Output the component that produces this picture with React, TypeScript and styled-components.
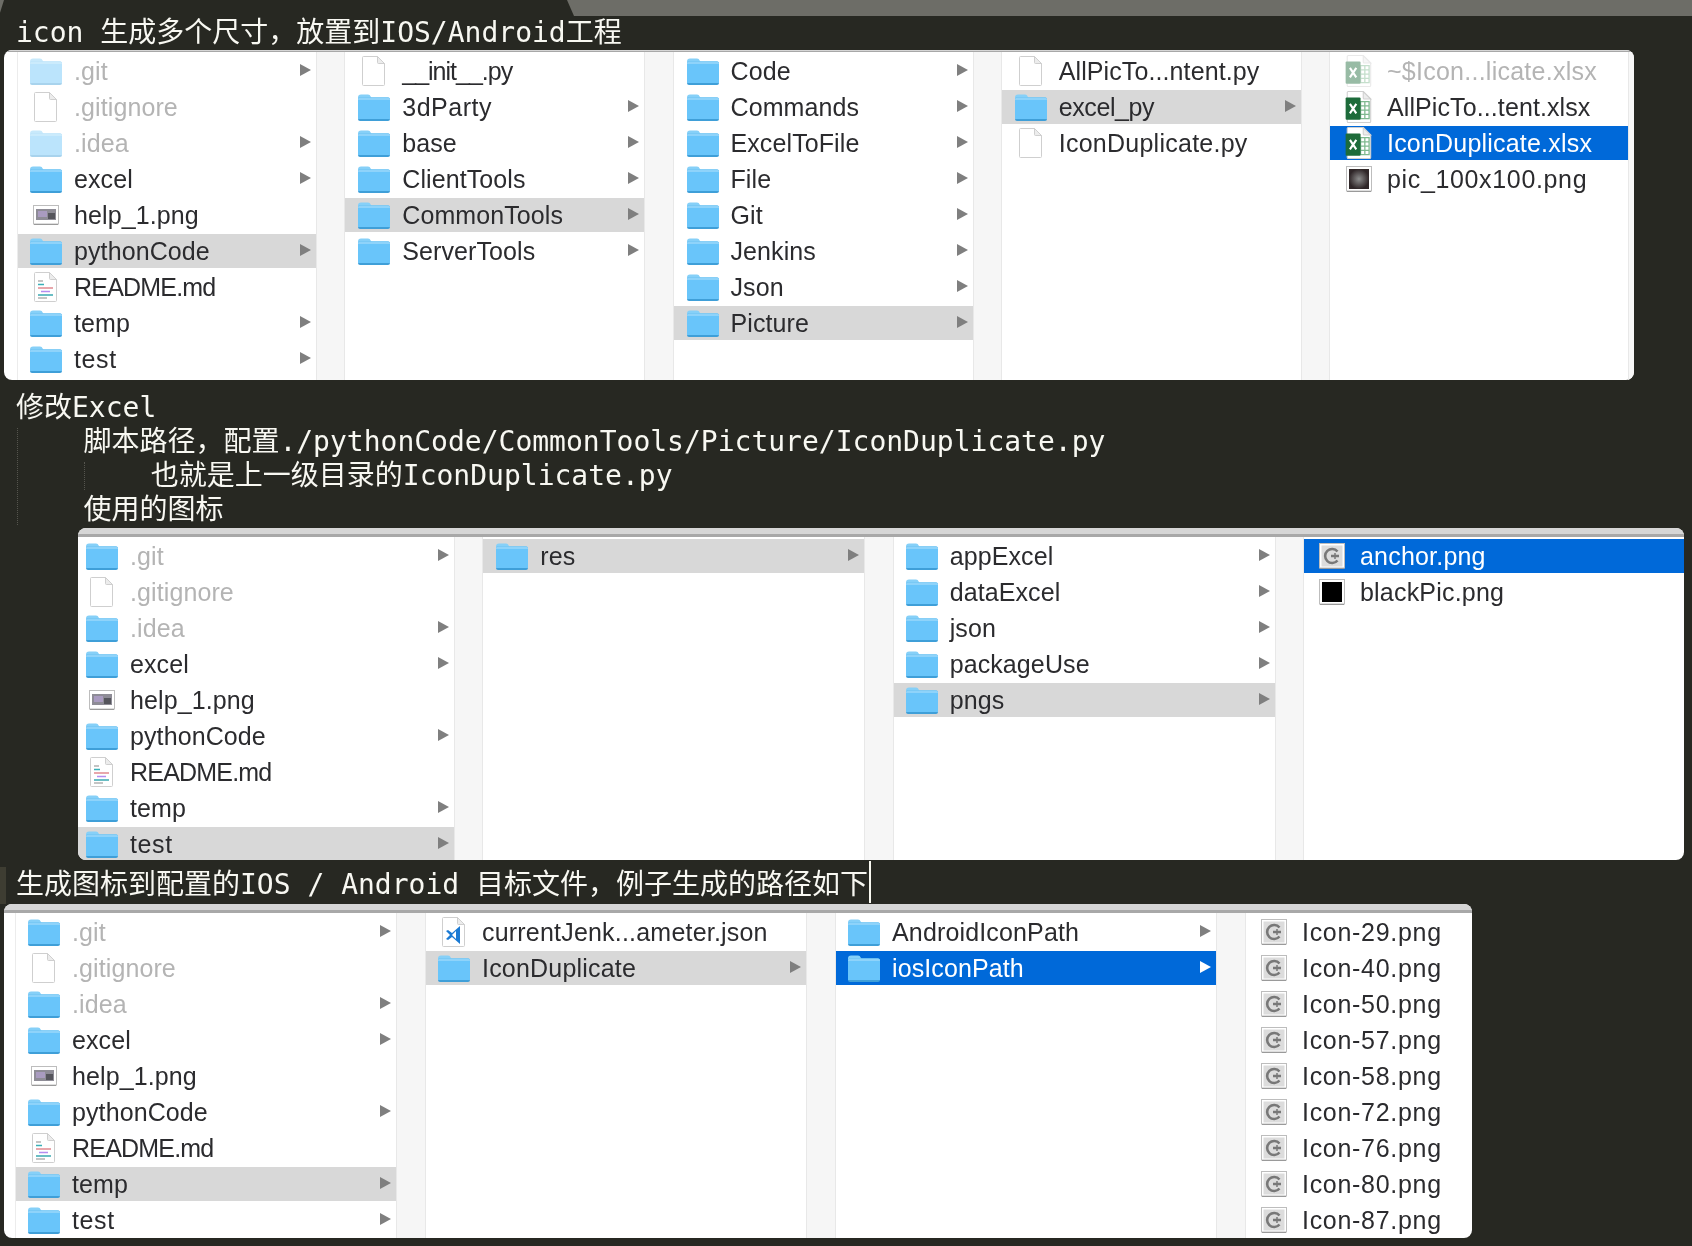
import React from 'react';
import styled, { createGlobalStyle } from 'styled-components';

type IconKind =
  | 'folder'
  | 'file'
  | 'readme'
  | 'shot'
  | 'excel'
  | 'anchor'
  | 'black'
  | 'pic'
  | 'json';

interface Item {
  name: string;
  icon: IconKind;
  arrow?: boolean;
  dim?: boolean;
  fade?: boolean;
  state?: 'gray' | 'blue';
  track?: number;
}

interface ColumnData {
  width: number;
  inset?: number;
  items: Item[];
}

const folder = (name: string, extra: Partial<Item> = {}): Item => ({
  name,
  icon: 'folder',
  arrow: true,
  ...extra,
});

const rootItems = (dimFolder: boolean, open: string): Item[] => [
  folder('.git', { dim: true, fade: dimFolder }),
  { name: '.gitignore', icon: 'file', dim: true },
  folder('.idea', { dim: true, fade: dimFolder }),
  folder('excel'),
  { name: 'help_1.png', icon: 'shot' },
  folder('pythonCode', open === 'pythonCode' ? { state: 'gray' } : {}),
  { name: 'README.md', icon: 'readme', track: -0.8 },
  folder('temp', open === 'temp' ? { state: 'gray' } : {}),
  folder('test', { track: 0.6, ...(open === 'test' ? { state: 'gray' as const } : {}) }),
];

const firstPanel: ColumnData[] = [
  { width: 298, inset: 12, items: rootItems(true, 'pythonCode') },
  {
    width: 299,
    items: [
      { name: '__init__.py', icon: 'file', track: -1 },
      folder('3dParty', { track: 0.5 }),
      folder('base'),
      folder('ClientTools'),
      folder('CommonTools', { state: 'gray' }),
      folder('ServerTools'),
    ],
  },
  {
    width: 299,
    items: [
      folder('Code'),
      folder('Commands'),
      folder('ExcelToFile'),
      folder('File'),
      folder('Git'),
      folder('Jenkins'),
      folder('Json'),
      folder('Picture', { state: 'gray' }),
    ],
  },
  {
    width: 299,
    items: [
      { name: 'AllPicTo...ntent.py', icon: 'file' },
      folder('excel_py', { state: 'gray', track: -0.4 }),
      { name: 'IconDuplicate.py', icon: 'file', track: 0.25 },
    ],
  },
  {
    width: 298,
    items: [
      { name: '~$Icon...licate.xlsx', icon: 'excel', dim: true, fade: true, track: 0.25 },
      { name: 'AllPicTo...tent.xlsx', icon: 'excel' },
      { name: 'IconDuplicate.xlsx', icon: 'excel', state: 'blue', track: 0.2 },
      { name: 'pic_100x100.png', icon: 'pic', track: 0.65 },
    ],
  },
];

const secondPanel: ColumnData[] = [
  { width: 376, inset: 8, items: rootItems(false, 'test') },
  { width: 381, items: [folder('res', { state: 'gray' })] },
  {
    width: 381,
    inset: 12,
    items: [
      folder('appExcel'),
      folder('dataExcel'),
      folder('json'),
      folder('packageUse'),
      folder('pngs', { state: 'gray' }),
    ],
  },
  {
    width: 380,
    inset: 12,
    items: [
      { name: 'anchor.png', icon: 'anchor', state: 'blue', track: 0.2 },
      { name: 'blackPic.png', icon: 'black', track: 0.2 },
    ],
  },
];

const thirdPanel: ColumnData[] = [
  { width: 380, inset: 12, items: rootItems(false, 'temp') },
  {
    width: 380,
    inset: 12,
    items: [
      { name: 'currentJenk...ameter.json', icon: 'json', track: 0.2 },
      folder('IconDuplicate', { state: 'gray', track: 0.2 }),
    ],
  },
  {
    width: 380,
    inset: 12,
    items: [
      folder('AndroidIconPath', { track: 0.15 }),
      folder('iosIconPath', { state: 'blue' }),
    ],
  },
  {
    width: 226,
    inset: 12,
    items: ['29', '40', '50', '57', '58', '72', '76', '80', '87'].map((size) => ({
      name: `Icon-${size}.png`,
      icon: 'anchor' as IconKind,
      track: 0.7,
    })),
  },
];

const FileIcon = ({ kind, fade }: { kind: IconKind; fade?: boolean }) => {
  if (kind === 'folder') {
    return (
      <IconSvg width={32} height={27} viewBox="0 0 32 27" $fade={fade}>
        <path d="M0 3.5C0 1.5 1 .5 3 .5h7c1.500 0 2 .8 3 2.500l.5 1H0z" fill="#86d0f8" />
        <rect x="0" y="3.500" width="32" height="23.500" rx="2" fill="#3f9fd8" />
        <path d="M2 3.500h28a2 2 0 0 1 2 2V25H0V5.500a2 2 0 0 1 2-2z" fill="#69c5fa" />
        <path d="M2 3.500h28a2 2 0 0 1 2 2v.5H0v-.5a2 2 0 0 1 2-2z" fill="#8ed3fa" />
      </IconSvg>
    );
  }
  if (kind === 'shot' || kind === 'black' || kind === 'pic' || kind === 'anchor') {
    const small = kind === 'shot';
    return (
      <IconSvg width={26} height={small ? 20 : 26} viewBox={small ? '0 0 26 20' : '0 0 26 26'}>
        <rect x=".5" y=".5" width="25" height={small ? 18.500 : 24.500} fill="#ffffff" stroke="#bdbdbd" />
        <path d={small ? 'M1 19.500h24' : 'M1 25.500h24'} stroke="#9a9a9a" />
        {kind === 'shot' && (
          <>
            <rect x="3" y="4" width="20" height="11" fill="#8e8c96" />
            <rect x="5" y="6" width="9" height="6" fill="#a99bc0" />
            <rect x="15" y="8" width="7" height="6" fill="#55555c" />
          </>
        )}
        {kind === 'black' && <rect x="3" y="3" width="20" height="20" fill="#000000" />}
        {kind === 'pic' && (
          <>
            <defs>
              <radialGradient id="picGlow">
                <stop offset="0" stopColor="#8d8d8d" />
                <stop offset="1" stopColor="#2f2628" />
              </radialGradient>
            </defs>
            <rect x="3" y="3" width="20" height="20" fill="url(#picGlow)" />
          </>
        )}
        {kind === 'anchor' && (
          <>
            <rect x="2.500" y="2.500" width="21" height="21" fill="#dcdcdc" />
            <path d="M18.500 8.500a7 7 0 1 0 0 9" fill="none" stroke="#787878" strokeWidth="2.600" />
            <path d="M12 13h8" stroke="#787878" strokeWidth="2.400" />
            <path d="M16 10v6" stroke="#787878" strokeWidth="1.500" />
          </>
        )}
      </IconSvg>
    );
  }
  const big = kind === 'excel';
  return (
    <IconSvg width={big ? 29 : 26} height={big ? 32 : 30} viewBox="0 0 26 30" $fade={fade}>
      <path
        d="M2.500.5h14l7 7v21a1 1 0 0 1-1 1h-20a1 1 0 0 1-1-1v-27a1 1 0 0 1 1-1z"
        fill="#ffffff"
        stroke="#cfcfcf"
      />
      <path d="M16.500.5v6a1 1 0 0 0 1 1h6z" fill="#ececec" stroke="#cfcfcf" />
      {kind === 'readme' && (
        <>
          <path d="M5 9h5" stroke="#b0b0b0" strokeWidth="1.500" />
          <path d="M5 12.500h6" stroke="#39b0b8" strokeWidth="1.500" />
          <path d="M5 16h15" stroke="#e08a90" strokeWidth="1.500" />
          <path d="M8 19.500h9" stroke="#b58cf0" strokeWidth="1.500" />
          <path d="M5 23h15" stroke="#39a8b0" strokeWidth="1.500" />
          <path d="M5 26h9" stroke="#b0b0b0" strokeWidth="1.500" />
        </>
      )}
      {kind === 'excel' && (
        <>
          <path
            d="M14 10h8v16h-8zM14 14h8M14 18h8M14 22h8M18 10v16"
            fill="none"
            stroke="#7fb98f"
            strokeWidth="1.200"
          />
          <rect x="0" y="6" width="14" height="21" rx="1" fill="#1d6b3a" />
          <path d="M4 12l6 9M10 12l-6 9" stroke="#ffffff" strokeWidth="2" />
        </>
      )}
      {kind === 'json' && (
        <>
          <path d="M19 9l-8 7-4-3-2 1 4 4-4 4 2 1 4-3 8 7z" fill="#1a7ad4" />
          <path d="M15 14v8l-4-4z" fill="#ffffff" />
        </>
      )}
    </IconSvg>
  );
};

const FinderPanel = ({
  columns,
  lead,
  trail,
  tall,
  left,
  width,
  height,
}: {
  columns: ColumnData[];
  lead?: number;
  trail?: number;
  tall?: boolean;
  left: number;
  width: number;
  height: number;
}) => (
  <Panel $left={left} $width={width} $height={height}>
    <TitleEdge $tall={tall} />
    <Columns>
      {lead ? <LeadSpace $width={lead} /> : null}
      {columns.map((column, i) => (
        <React.Fragment key={i}>
          <Column $width={column.width}>
            {column.items.map((item) => (
              <Row key={item.name} $state={item.state} $inset={column.inset ?? 13}>
                <IconBox>
                  <FileIcon kind={item.icon} fade={item.fade} />
                </IconBox>
                <RowName $state={item.state} $dim={item.dim} $track={item.track}>
                  {item.name}
                </RowName>
                {item.arrow && <Arrow $state={item.state} />}
              </Row>
            ))}
          </Column>
          {i < columns.length - 1 && <ColumnGutter />}
        </React.Fragment>
      ))}
      {trail ? <TrailGutter $width={trail} /> : null}
    </Columns>
  </Panel>
);

export default function App() {
  return (
    <Page>
      <GlobalStyle />
      <TabBar>
        <TabSliver />
        <TabActive />
      </TabBar>
      <Line>icon 生成多个尺寸，放置到IOS/Android工程</Line>
      <FinderPanel columns={firstPanel} lead={14} trail={6} left={4} width={1630} height={330} />
      <Notes>
        <Guide $left={17} $top={37} $height={97} />
        <Guide $left={84} $top={71} $height={28} />
        <Line>修改Excel</Line>
        <Line $indent={1}>脚本路径，配置./pythonCode/CommonTools/Picture/IconDuplicate.py</Line>
        <Line $indent={2}>也就是上一级目录的IconDuplicate.py</Line>
        <Line $indent={1}>使用的图标</Line>
      </Notes>
      <FinderPanel columns={secondPanel} tall left={78} width={1606} height={332} />
      <ActiveLine>
        <LineMark />
        <ActiveText>生成图标到配置的IOS / Android 目标文件，例子生成的路径如下</ActiveText>
        <Caret />
      </ActiveLine>
      <FinderPanel columns={thirdPanel} lead={12} tall left={4} width={1468} height={334} />
    </Page>
  );
}

const GlobalStyle = createGlobalStyle`
  html, body {
    margin: 0;
    background: #272822;
  }
`;

const Page = styled.div`
  width: 1692px;
  height: 1246px;
  overflow: hidden;
  background: #272822;
  color: #f8f8f2;
  font-family: 'DejaVu Sans Mono', 'Noto Sans CJK SC', monospace;
  font-size: 28px;
  filter: blur(0.4px);
`;

const TabBar = styled.div`
  display: flex;
  justify-content: space-between;
  height: 16px;
`;
const TabSliver = styled.div`
  width: 4px;
  background: #6d6d67;
  clip-path: polygon(0 0, 100% 0, 0 80%);
`;
const TabActive = styled.div`
  width: 1125px;
  background: #6d6d67;
  clip-path: polygon(0 0, 100% 0, 100% 100%, 7px 100%);
`;

const Line = styled.div<{ $indent?: number }>`
  height: 34px;
  line-height: 34px;
  padding-left: ${(props) => 16 + (props.$indent ?? 0) * 67.4}px;
  white-space: pre;
`;

const Notes = styled.div`
  position: relative;
  margin: 11px 0 1px;
`;
const Guide = styled.div<{ $left: number; $top: number; $height: number }>`
  position: absolute;
  left: ${(props) => props.$left}px;
  top: ${(props) => props.$top}px;
  height: ${(props) => props.$height}px;
  border-left: 1px dotted #55554e;
`;

const ActiveLine = styled.div`
  display: flex;
  align-items: center;
  height: 44px;
`;
const LineMark = styled.div`
  width: 6px;
  height: 37px;
  margin-top: 6px;
  background: #3e3d32;
`;
const ActiveText = styled.div`
  padding-left: 10px;
  white-space: pre;
`;
const Caret = styled.div`
  width: 2px;
  height: 42px;
  margin-left: 1px;
  background: #f8f8f0;
`;

const Panel = styled.div<{ $left: number; $width: number; $height: number }>`
  display: flex;
  flex-direction: column;
  width: ${(props) => props.$width}px;
  height: ${(props) => props.$height}px;
  margin-left: ${(props) => props.$left}px;
  overflow: hidden;
  background: #ffffff;
  border-radius: 8px;
  font-family: 'Liberation Sans', Arial, sans-serif;
  font-size: 25px;
`;
const TitleEdge = styled.div<{ $tall?: boolean }>`
  flex: none;
  height: ${(props) => (props.$tall ? 9 : 2)}px;
  background: #d6d6d6;
  border-bottom: ${(props) => (props.$tall ? '3px' : '1px')} solid #a8a8a8;
  box-sizing: border-box;
`;
const Columns = styled.div`
  display: flex;
  flex: 1;
  min-height: 0;
`;
const LeadSpace = styled.div<{ $width: number }>`
  width: ${(props) => props.$width}px;
  border-right: 1px solid #ececec;
  box-sizing: border-box;
`;
const Column = styled.div<{ $width: number }>`
  display: flex;
  flex-direction: column;
  gap: 2px;
  width: ${(props) => props.$width}px;
  padding-top: 2px;
`;
const ColumnGutter = styled.div`
  flex: 1 0 0;
  max-width: 30px;
  min-width: 29px;
  box-sizing: border-box;
  background: #f6f6f6;
  border-left: 1px solid #e8e8e8;
  border-right: 1px solid #e8e8e8;
`;
const TrailGutter = styled.div<{ $width: number }>`
  width: ${(props) => props.$width}px;
  box-sizing: border-box;
  background: #f8f8f8;
  border-left: 1px solid #e8e8e8;
`;

const Row = styled.div<{ $state?: 'gray' | 'blue'; $inset: number }>`
  display: flex;
  align-items: center;
  flex: none;
  height: 34px;
  padding-left: ${(props) => props.$inset}px;
  background: ${(props) =>
    props.$state === 'blue' ? '#0069d9' : props.$state === 'gray' ? '#d8d8d8' : 'transparent'};
`;
const IconBox = styled.div`
  display: flex;
  align-items: center;
  justify-content: center;
  flex: none;
  width: 32px;
  height: 34px;
  margin-right: 12px;
`;
const IconSvg = styled.svg<{ $fade?: boolean }>`
  display: block;
  flex: none;
  opacity: ${(props) => (props.$fade ? 0.45 : 1)};
`;
const RowName = styled.span<{ $state?: 'gray' | 'blue'; $dim?: boolean; $track?: number }>`
  white-space: pre;
  letter-spacing: ${(props) => props.$track ?? 0.1}px;
  color: ${(props) =>
    props.$state === 'blue' ? '#ffffff' : props.$dim ? '#b4b4b4' : '#2b2b2e'};
`;
const Arrow = styled.i<{ $state?: 'gray' | 'blue' }>`
  flex: none;
  margin: -3px 5px 0 auto;
  border-style: solid;
  border-width: 6.5px 0 6.5px 11px;
  border-color: transparent transparent transparent
    ${(props) => (props.$state === 'blue' ? '#ffffff' : '#7f7f7f')};
`;
